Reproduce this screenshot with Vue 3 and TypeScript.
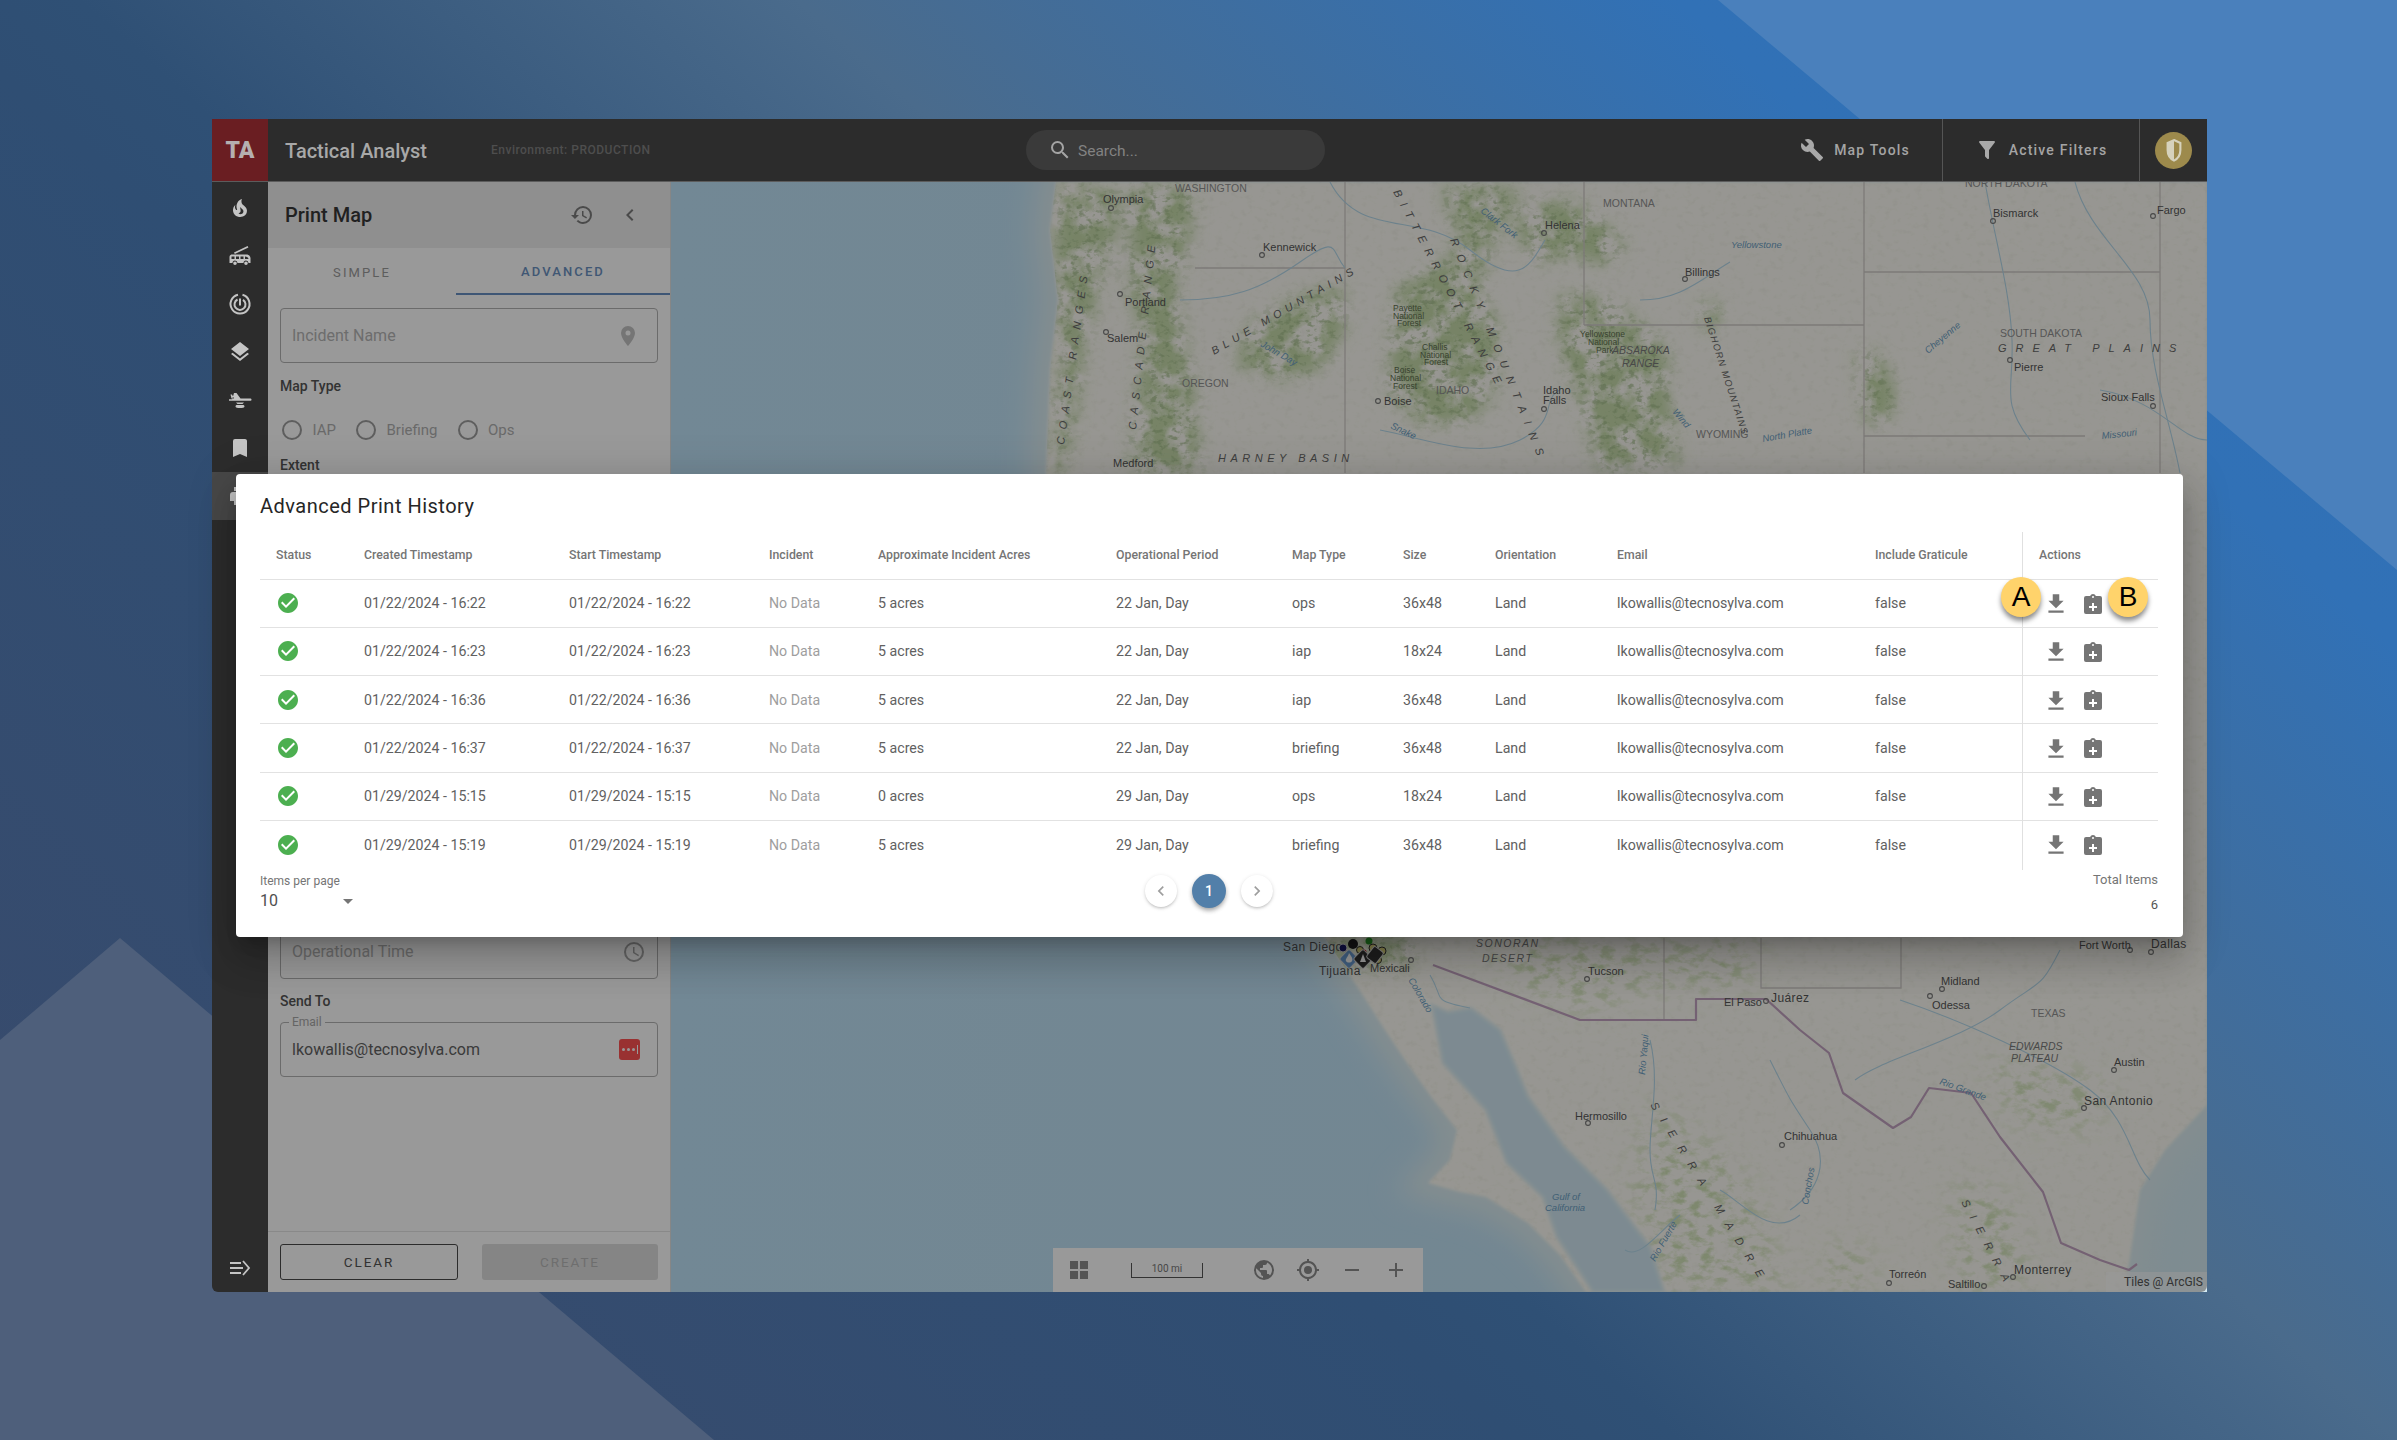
<script setup lang="ts">
interface MapLabel {
    x: number;
    y: number;
    t: string;
    k?: string;
    rot?: number;
    ls?: number;
}

const paths = {
    fire: "M17.66 11.2C17.43 10.9 17.15 10.64 16.89 10.38C16.22 9.78 15.46 9.35 14.82 8.72C13.33 7.26 13 4.85 13.95 3C13 3.23 12.17 3.75 11.46 4.32C8.87 6.4 7.85 10.07 9.07 13.22C9.11 13.32 9.15 13.42 9.15 13.55C9.15 13.77 9 13.97 8.8 14.05C8.57 14.15 8.33 14.09 8.14 13.93C8.08 13.88 8.04 13.83 8 13.76C6.87 12.33 6.69 10.28 7.45 8.64C5.78 10 4.87 12.3 5 14.47C5.06 14.97 5.12 15.47 5.29 15.97C5.43 16.57 5.7 17.17 6 17.7C7.08 19.43 8.95 20.67 10.96 20.92C13.1 21.19 15.39 20.8 17.03 19.32C18.86 17.66 19.5 15 18.56 12.72L18.43 12.46C18.28 12.13 17.66 11.2 17.66 11.2M14.5 17.5C14.22 17.74 13.76 18 13.4 18.1C12.28 18.5 11.16 17.94 10.5 17.28C11.69 17 12.4 16.12 12.61 15.23C12.78 14.43 12.46 13.77 12.33 13C12.21 12.26 12.23 11.63 12.5 10.94C12.69 11.32 12.89 11.7 13.13 12C13.9 13 15.11 13.44 15.37 14.8C15.41 14.94 15.43 15.08 15.43 15.23C15.46 16.05 15.1 16.95 14.5 17.5Z",
    truck: "M19.6 2L20.4 3.600 6.800 10 6 8.400ZM4 10.500H18.500C20.600 10.500 22.500 12.100 22.500 14.100V19H20.500A2.500 2.500 0 0 0 15.500 19H9.500A2.500 2.500 0 0 0 4.500 19H1.500V13C1.500 11.500 2.500 10.500 4 10.500ZM3.500 12.500V15H6.500V12.500ZM8 12.500V15H11V12.500ZM12.500 12.500V15H15.500V12.500ZM17 12.500V15H20.500C20.400 13.600 19 12.500 17 12.500ZM7 17.500A1.800 1.800 0 1 1 7 21.100 1.800 1.800 0 0 1 7 17.500ZM18 17.500A1.800 1.800 0 1 1 18 21.100 1.800 1.800 0 0 1 18 17.500Z",
    layers: "M12,16L19.36,10.27L21,9L12,2L3,9L4.63,10.27M12,18.54L4.62,12.81L3,14.07L12,21.07L21,14.07L19.37,12.81L12,18.54Z",
    plane: "M6 5L8.5 5 12.5 10.5H22C23 10.5 23.5 11 23.5 11.7 23.5 12.3 23 12.7 22 12.7H1V11.2H4.2ZM2.5 6.5L4 6.5 6 10.5H3.5ZM8 14.5H16L14.5 16H9.5ZM9 17H15C15.8 17 16.5 17.6 16.5 18.4 16.5 19.3 14.5 20 12 20S7.5 19.3 7.5 18.4C7.5 17.6 8.2 17 9 17Z",
    bookmark: "M17,3H7A2,2 0 0,0 5,5V21L12,18L19,21V5C19,3.89 18.1,3 17,3Z",
    printer: "M18,3H6V7H18M19,12A1,1 0 0,1 18,11A1,1 0 0,1 19,10A1,1 0 0,1 20,11A1,1 0 0,1 19,12M16,19H8V14H16M19,8H5A3,3 0 0,0 2,11V17H6V21H18V17H22V11A3,3 0 0,0 19,8Z",
    wrench: "M22.7,19L13.6,9.9C14.5,7.6 14,4.9 12.1,3C10.1,1 7.1,0.6 4.7,1.7L9,6L6,9L1.6,4.7C0.4,7.1 0.9,10.1 2.9,12.1C4.8,14 7.5,14.5 9.8,13.6L18.9,22.7C19.3,23.1 19.9,23.1 20.3,22.7L22.6,20.4C23.1,20 23.1,19.3 22.7,19Z",
    filter: "M14,12V19.88C14.04,20.18 13.94,20.5 13.71,20.71C13.32,21.1 12.69,21.1 12.3,20.71L10.29,18.7C10.06,18.47 9.96,18.16 10,17.87V12H9.97L4.21,4.62C3.87,4.19 3.95,3.56 4.38,3.22C4.57,3.08 4.78,3 5,3V3H19V3C19.22,3 19.43,3.08 19.62,3.22C20.05,3.56 20.13,4.19 19.79,4.62L14.03,12H14Z",
    search: "M9.5,3A6.5,6.5 0 0,1 16,9.5C16,11.11 15.41,12.59 14.44,13.73L14.71,14H15.5L20.5,19L19,20.5L14,15.5V14.71L13.73,14.44C12.59,15.41 11.11,16 9.5,16A6.5,6.5 0 0,1 3,9.5A6.5,6.5 0 0,1 9.5,3M9.5,5C7,5 5,7 5,9.5C5,12 7,14 9.5,14C12,14 14,12 14,9.5C14,7 12,5 9.5,5Z",
    history: "M13.5,8H12V13L16.28,15.54L17,14.33L13.5,12.25V8M13,3A9,9 0 0,0 4,12H1L4.96,16.03L9,12H6A7,7 0 0,1 13,5A7,7 0 0,1 20,12A7,7 0 0,1 13,19C11.07,19 9.32,18.21 8.06,16.94L6.64,18.36C8.27,20 10.5,21 13,21A9,9 0 0,0 22,12A9,9 0 0,0 13,3",
    left: "M15.41,16.58L10.83,12L15.41,7.41L14,6L8,12L14,18L15.41,16.58Z",
    right: "M8.59,16.58L13.17,12L8.59,7.41L10,6L16,12L10,18L8.59,16.58Z",
    marker: "M12,11.5A2.5,2.5 0 0,1 9.5,9A2.5,2.5 0 0,1 12,6.5A2.5,2.5 0 0,1 14.5,9A2.5,2.5 0 0,1 12,11.5M12,2A7,7 0 0,0 5,9C5,14.25 12,22 12,22C12,22 19,14.25 19,9A7,7 0 0,0 12,2Z",
    clock: "M12,20A8,8 0 0,0 20,12A8,8 0 0,0 12,4A8,8 0 0,0 4,12A8,8 0 0,0 12,20M12,2A10,10 0 0,1 22,12A10,10 0 0,1 12,22A10,10 0 0,1 2,12A10,10 0 0,1 12,2M12.5,7V12.25L17,14.92L16.25,16.16L11,13V7H12.5Z",
    check: "M12 2C6.5 2 2 6.5 2 12S6.5 22 12 22 22 17.5 22 12 17.5 2 12 2M10 17L5 12L6.41 10.59L10 14.17L17.59 6.58L19 8L10 17Z",
    download: "M5,20H19V18H5M19,9H15V3H9V9H5L12,16L19,9Z",
    clipboard: "M19,3H14.82C14.4,1.84 13.3,1 12,1C10.7,1 9.6,1.84 9.18,3H5A2,2 0 0,0 3,5V19A2,2 0 0,0 5,21H19A2,2 0 0,0 21,19V5A2,2 0 0,0 19,3M12,3A1,1 0 0,1 13,4A1,1 0 0,1 12,5A1,1 0 0,1 11,4A1,1 0 0,1 12,3M16,15H13V18H11V15H8V13H11V10H13V13H16V15Z",
    grid: "M3,11H11V3H3M3,21H11V13H3M13,21H21V13H13M13,3V11H21V3",
    earth: "M17.9,17.39C17.64,16.59 16.89,16 16,16H15V13A1,1 0 0,0 14,12H8V10H10A1,1 0 0,0 11,9V7H13A2,2 0 0,0 15,5V4.59C17.93,5.77 20,8.64 20,12C20,14.08 19.2,15.97 17.9,17.39M11,19.93C7.05,19.44 4,16.08 4,12C4,11.38 4.08,10.78 4.21,10.21L9,15V16A2,2 0 0,0 11,18M12,2A10,10 0 0,0 2,12A10,10 0 0,0 12,22A10,10 0 0,0 22,12A10,10 0 0,0 12,2Z",
    gps: "M12,8A4,4 0 0,1 16,12A4,4 0 0,1 12,16A4,4 0 0,1 8,12A4,4 0 0,1 12,8M3.05,13H1V11H3.05C3.5,6.83 6.83,3.5 11,3.05V1H13V3.05C17.17,3.5 20.5,6.83 20.95,11H23V13H20.95C20.5,17.17 17.17,20.5 13,20.95V23H11V20.95C6.83,20.5 3.5,17.17 3.05,13M12,5A7,7 0 0,0 5,12A7,7 0 0,0 12,19A7,7 0 0,0 19,12A7,7 0 0,0 12,5Z",
    minus: "M19,13H5V11H19V13Z",
    plus: "M19,13H13V19H11V13H5V11H11V5H13V11H19V13Z"
};

const navIcons = [paths.fire, paths.truck, "radar", paths.layers, paths.plane, paths.bookmark, paths.printer];

const columns = [
    "Status",
    "Created Timestamp",
    "Start Timestamp",
    "Incident",
    "Approximate Incident Acres",
    "Operational Period",
    "Map Type",
    "Size",
    "Orientation",
    "Email",
    "Include Graticule",
    "Actions"
];

const rows = [
    { stamp: "01/22/2024 - 16:22", acres: "5 acres", period: "22 Jan, Day", type: "ops", size: "36x48" },
    { stamp: "01/22/2024 - 16:23", acres: "5 acres", period: "22 Jan, Day", type: "iap", size: "18x24" },
    { stamp: "01/22/2024 - 16:36", acres: "5 acres", period: "22 Jan, Day", type: "iap", size: "36x48" },
    { stamp: "01/22/2024 - 16:37", acres: "5 acres", period: "22 Jan, Day", type: "briefing", size: "36x48" },
    { stamp: "01/29/2024 - 15:15", acres: "0 acres", period: "29 Jan, Day", type: "ops", size: "18x24" },
    { stamp: "01/29/2024 - 15:19", acres: "5 acres", period: "29 Jan, Day", type: "briefing", size: "36x48" }
];

const land =
    "M1056,182 L1050,230 1058,300 1050,370 1046,474 1120,640 1240,820 1320,930 1345,968 1364,997 1385,1030 1407,1063 1432,1098 1457,1130 1450,1160 1428,1183 1460,1192 1486,1197 1510,1212 1528,1223 1560,1255 1586,1292 L2130,1292 2128,1270 2140,1190 2165,1150 2207,1105 L2207,182Z";

const gulf =
    "M1432,1005 L1448,1012 1471,1008 1500,1030 1515,1065 1528,1097 1564,1147 1607,1190 1628,1218 1650,1247 1664,1292 L1593,1292 1557,1237 1543,1197 1507,1163 1486,1110 1443,1063Z";

// dense forest: Cascades, Idaho, western Montana, Yellowstone
const forests = [
    "M1056,187 L1110,187 1120,215 1105,270 1085,340 1075,420 1062,474 1052,474 1060,360 1055,270Z",
    "M1125,187 L1194,187 1190,240 1175,290 1182,330 1195,400 1200,473 1130,473 1138,400 1142,330 1128,290 1132,240Z",
    "M1350,187 L1440,187 1460,235 1445,262 1425,270 1395,292 1390,340 1388,395 1425,426 1470,420 1495,395 1500,330 1478,290 1495,240 1520,190 1500,187Z",
    "M1520,205 L1570,200 1625,240 1612,265 1570,255 1535,262 1518,235Z",
    "M1560,293 L1610,300 1665,345 1672,420 1680,463 1600,473 1585,420 1558,340Z",
    "M1235,365 L1250,325 1290,300 1342,285 1345,330 1320,370 1280,380Z",
    "M1856,353 L1878,352 1897,395 1885,425 1865,420Z",
    "M1700,300 L1720,305 1718,330 1700,325Z",
    "M1310,938 L1400,938 1420,958 1400,968 1345,968Z"
];

// sparse vegetation further south
const scrub = [
    "M1480,938 L1610,938 1630,1000 1585,1010 1520,990Z",
    "M1650,1100 L1740,1170 1790,1290 1660,1292 1630,1190Z",
    "M1950,1180 L2010,1200 2030,1280 1960,1292Z",
    "M1830,1240 L1880,1260 1860,1292 1820,1292Z",
    "M1980,1060 L2110,1080 2090,1130 2010,1120Z",
    "M1580,940 L1760,940 1750,990 1620,985Z"
];

const usBorder =
    "M1433,965 L1580,1020 1696,1020 1696,999 1766,999 1800,1030 1829,1053 1843,1093 1893,1128 1911,1117 1929,1088 1971,1093 2000,1137 2043,1192 2061,1243 2100,1260 2129,1270 2137,1264";

const stateLines = [
    "M1864,182V473",
    "M1864,272H2160",
    "M1584,325H1864",
    "M1864,436H2085",
    "M1195,268H1345",
    "M1345,182V473",
    "M2160,182V473",
    "M1664,938V1020",
    "M1761,938V988H1901V938",
    "M1584,182V325"
];

const rivers = [
    "M1330,182 C1360,240 1420,210 1470,250 S1530,265 1545,240",
    "M1180,300 C1230,300 1260,290 1300,262 S1330,250 1345,268",
    "M1730,262 C1700,280 1680,300 1640,300",
    "M1380,430 C1430,440 1480,460 1520,440 S1540,400 1560,390",
    "M1985,182 C1995,240 2010,290 2012,340 S2000,400 2030,440",
    "M2075,182 C2090,240 2150,270 2150,320 S2170,420 2180,473",
    "M2100,390 C2160,400 2180,440 2207,440",
    "M1430,975 C1445,1000 1430,1000 1470,1008",
    "M1650,1040 C1660,1080 1650,1120 1650,1150 S1660,1180 1655,1210",
    "M1790,1210 C1820,1190 1830,1160 1810,1130 S1790,1100 1770,1060",
    "M1800,1215 C1770,1240 1740,1200 1720,1190",
    "M1900,1000 C1960,1020 2050,1060 2090,1090 S2130,1160 2150,1180",
    "M1855,1080 C1880,1060 1960,1040 2000,1010 S2040,990 2060,950",
    "M1625,1250 C1640,1260 1660,1230 1680,1215"
];

const cities = [
    [1111, 208], [1262, 255], [1120, 294], [1106, 332], [1544, 233], [1685, 279], [1993, 221], [2153, 216],
    [1378, 401], [1544, 409], [2010, 360], [2153, 406], [1587, 979], [1766, 1001], [1942, 989], [1930, 996],
    [2130, 950], [2151, 952], [2114, 1070], [2084, 1108], [1588, 1123], [1782, 1145], [1889, 1283], [1984, 1286],
    [2013, 1277], [1411, 960]
];

const labels: MapLabel[] = [
    { x: 1175, y: 192, t: "WASHINGTON", k: "area" },
    { x: 1103, y: 203, t: "Olympia" },
    { x: 1263, y: 251, t: "Kennewick" },
    { x: 1125, y: 306, t: "Portland" },
    { x: 1107, y: 342, t: "Salem" },
    { x: 1214, y: 355, t: "BLUE MOUNTAINS", k: "range", rot: -30, ls: 5 },
    { x: 1182, y: 387, t: "OREGON", k: "area" },
    { x: 1218, y: 462, t: "HARNEY BASIN", k: "range", ls: 4.5 },
    { x: 1113, y: 467, t: "Medford" },
    { x: 1545, y: 229, t: "Helena" },
    { x: 1603, y: 207, t: "MONTANA", k: "area" },
    { x: 1685, y: 276, t: "Billings" },
    { x: 1993, y: 217, t: "Bismarck" },
    { x: 2157, y: 214, t: "Fargo" },
    { x: 1731, y: 248, t: "Yellowstone", k: "river" },
    { x: 1543, y: 394, t: "Idaho" },
    { x: 1543, y: 404, t: "Falls" },
    { x: 1384, y: 405, t: "Boise" },
    { x: 1436, y: 394, t: "IDAHO", k: "area" },
    { x: 1696, y: 438, t: "WYOMING", k: "area" },
    { x: 2000, y: 337, t: "SOUTH DAKOTA", k: "area" },
    { x: 1998, y: 352, t: "GREAT PLAINS", k: "range", ls: 9 },
    { x: 2014, y: 371, t: "Pierre" },
    { x: 2101, y: 401, t: "Sioux Falls" },
    { x: 1965, y: 187, t: "NORTH DAKOTA", k: "area" },
    { x: 1612, y: 354, t: "ABSAROKA", k: "italic" },
    { x: 1622, y: 367, t: "RANGE", k: "italic" },
    { x: 1580, y: 337, t: "Yellowstone", k: "forest" },
    { x: 1588, y: 345, t: "National", k: "forest" },
    { x: 1596, y: 353, t: "Park", k: "forest" },
    { x: 1393, y: 311, t: "Payette", k: "forest" },
    { x: 1393, y: 319, t: "National", k: "forest" },
    { x: 1397, y: 326, t: "Forest", k: "forest" },
    { x: 1422, y: 350, t: "Challis", k: "forest" },
    { x: 1420, y: 358, t: "National", k: "forest" },
    { x: 1424, y: 365, t: "Forest", k: "forest" },
    { x: 1394, y: 373, t: "Boise", k: "forest" },
    { x: 1390, y: 381, t: "National", k: "forest" },
    { x: 1393, y: 389, t: "Forest", k: "forest" },
    { x: 1704, y: 318, t: "BIGHORN MOUNTAINS", k: "small", rot: 72, ls: 1.2 },
    { x: 1393, y: 192, t: "BITTERROOT RANGE", k: "range", rot: 62, ls: 7 },
    { x: 1450, y: 240, t: "ROCKY MOUNTAINS", k: "range", rot: 68, ls: 9 },
    { x: 1136, y: 430, t: "CASCADE RANGE", k: "range", rot: -84, ls: 7.5 },
    { x: 1064, y: 445, t: "COAST RANGES", k: "range", rot: -82, ls: 7.5 },
    { x: 1480, y: 212, t: "Clark Fork", k: "river", rot: 38 },
    { x: 1260, y: 346, t: "John Day", k: "river", rot: 30 },
    { x: 1390, y: 428, t: "Snake", k: "river", rot: 25 },
    { x: 1672, y: 412, t: "Wind", k: "river", rot: 50 },
    { x: 1763, y: 442, t: "North Platte", k: "river", rot: -10 },
    { x: 1928, y: 354, t: "Cheyenne", k: "river", rot: -40 },
    { x: 2102, y: 439, t: "Missouri", k: "river", rot: -6 },
    { x: 1476, y: 947, t: "SONORAN", k: "italic", ls: 1.5 },
    { x: 1482, y: 962, t: "DESERT", k: "italic", ls: 1.5 },
    { x: 1283, y: 951, t: "San Diego", k: "large" },
    { x: 1319, y: 975, t: "Tijuana", k: "large" },
    { x: 1370, y: 972, t: "Mexicali" },
    { x: 1588, y: 975, t: "Tucson" },
    { x: 1724, y: 1006, t: "El Paso" },
    { x: 1771, y: 1002, t: "Juárez", k: "large" },
    { x: 1941, y: 985, t: "Midland" },
    { x: 1932, y: 1009, t: "Odessa" },
    { x: 2031, y: 1017, t: "TEXAS", k: "area" },
    { x: 2009, y: 1050, t: "EDWARDS", k: "italic" },
    { x: 2011, y: 1062, t: "PLATEAU", k: "italic" },
    { x: 2114, y: 1066, t: "Austin" },
    { x: 2084, y: 1105, t: "San Antonio", k: "large" },
    { x: 2079, y: 949, t: "Fort Worth" },
    { x: 2151, y: 948, t: "Dallas", k: "large" },
    { x: 1575, y: 1120, t: "Hermosillo" },
    { x: 1784, y: 1140, t: "Chihuahua" },
    { x: 1552, y: 1200, t: "Gulf of", k: "river" },
    { x: 1545, y: 1211, t: "California", k: "river" },
    { x: 1650, y: 1105, t: "SIERRA MADRE", k: "range", rot: 58, ls: 11 },
    { x: 1889, y: 1278, t: "Torreón" },
    { x: 1948, y: 1288, t: "Saltillo" },
    { x: 2014, y: 1274, t: "Monterrey", k: "large" },
    { x: 1961, y: 1202, t: "SIERRA", k: "range", rot: 62, ls: 10 },
    { x: 1939, y: 1084, t: "Rio Grande", k: "river", rot: 20 },
    { x: 1645, y: 1075, t: "Rio Yaqui", k: "river", rot: -85 },
    { x: 1808, y: 1205, t: "Conchos", k: "river", rot: -80 },
    { x: 1408, y: 980, t: "Colorado", k: "river", rot: 60 },
    { x: 1655, y: 1262, t: "Rio Fuerte", k: "river", rot: -60 }
];

const rotation = (l: MapLabel) => (l.rot ? `rotate(${l.rot} ${l.x} ${l.y})` : undefined);
</script>

<template>
    <div class="page">
        <div class="shape shape-light"></div>
        <div class="shape shape-peak"></div>

        <div class="window">
            <header class="topbar">
                <div class="logo">TA</div>
                <div class="app-title">Tactical Analyst</div>
                <div class="env">Environment: PRODUCTION</div>
                <div class="search">
                    <svg viewBox="0 0 24 24" class="search-icon"><path :d="paths.search" /></svg>
                    <span>Search...</span>
                </div>
                <div class="tool first">
                    <svg viewBox="0 0 24 24"><path :d="paths.wrench" /></svg>
                    <span>Map Tools</span>
                </div>
                <div class="tool second">
                    <svg viewBox="0 0 24 24"><path :d="paths.filter" /></svg>
                    <span>Active Filters</span>
                </div>
                <div class="avatar-box">
                    <div class="avatar">
                        <svg viewBox="0 0 24 24">
                            <path d="M12 5L16.500 7V12C16.500 15.500 15 18 12 19.500C9 18 7.500 15.500 7.500 12V7Z" fill="none" stroke="#d6d2bd" stroke-width="1.500" />
                            <path d="M12 5L7.500 7V12C7.500 15.500 9 18 12 19.500Z" fill="#d6d2bd" />
                        </svg>
                    </div>
                </div>
            </header>

            <div class="main">
                <nav class="sidebar">
                    <div v-for="(icon, i) in navIcons" :key="i" class="nav-item" :class="{ active: i === 6 }">
                        <svg v-if="icon === 'radar'" viewBox="0 0 24 24" class="radar">
                            <path d="M10 2.700A9.500 9.500 0 1 0 14.500 2.800" />
                            <path d="M9.500 7.500A5.500 5.500 0 1 0 15 7.800" />
                            <path d="M12 6.500V13.500" />
                        </svg>
                        <svg v-else viewBox="0 0 24 24"><path :d="icon" fill-rule="evenodd" /></svg>
                    </div>
                    <div class="nav-bottom">
                        <svg viewBox="0 0 24 24" class="collapse">
                            <path d="M2 7H13M2 12H15M2 17H13M15 5L21 12 15 19" />
                        </svg>
                    </div>
                </nav>

                <div class="work">
                    <aside class="panel">
                        <div class="panel-head">
                            <span class="panel-title">Print Map</span>
                            <svg viewBox="0 0 24 24" class="head-history"><path :d="paths.history" /></svg>
                            <svg viewBox="0 0 24 24" class="head-back"><path :d="paths.left" /></svg>
                        </div>
                        <div class="tabs">
                            <div class="tab">SIMPLE</div>
                            <div class="tab active">ADVANCED</div>
                        </div>
                        <div class="panel-body">
                            <div class="field first-field">
                                <span class="placeholder">Incident Name</span>
                                <svg viewBox="0 0 24 24" class="field-icon"><path :d="paths.marker" /></svg>
                            </div>
                            <div class="label map-type">Map Type</div>
                            <div class="radios">
                                <div class="radio"><i></i>IAP</div>
                                <div class="radio"><i></i>Briefing</div>
                                <div class="radio"><i></i>Ops</div>
                            </div>
                            <div class="label extent">Extent</div>
                            <div class="hidden-fields"></div>
                            <div class="field">
                                <span class="placeholder">Operational Time</span>
                                <svg viewBox="0 0 24 24" class="field-icon clock"><path :d="paths.clock" /></svg>
                            </div>
                            <div class="label send-to">Send To</div>
                            <div class="field email">
                                <span class="legend">Email</span>
                                <span class="value">lkowallis@tecnosylva.com</span>
                                <span class="lastpass">
                                    <b></b><b></b><b></b><em></em>
                                </span>
                            </div>
                        </div>
                        <div class="panel-foot">
                            <div class="btn clear">CLEAR</div>
                            <div class="btn create">CREATE</div>
                        </div>
                    </aside>

                    <section class="map">
                        <svg class="map-svg" viewBox="671 182 1536 1110" preserveAspectRatio="none">
                            <defs>
                                <linearGradient id="sea" x1="0" y1="0" x2="1" y2="0">
                                    <stop offset="0" stop-color="#bfe3f8" />
                                    <stop offset="0.6" stop-color="#c0e1f3" />
                                    <stop offset="1" stop-color="#d4eaf2" />
                                </linearGradient>
                                <filter id="patchy" x="-5%" y="-5%" width="110%" height="110%">
                                    <feGaussianBlur in="SourceGraphic" stdDeviation="8" result="soft" />
                                    <feTurbulence type="fractalNoise" baseFrequency="0.04" numOctaves="5" seed="8" result="noise" />
                                    <feColorMatrix in="noise" values="0 0 0 0 0  0 0 0 0 0  0 0 0 0 0  3.500 0 0 0 -1.150" result="mask" />
                                    <feComposite in="soft" in2="mask" operator="in" />
                                </filter>
                                <filter id="ridges" x="-5%" y="-5%" width="110%" height="110%">
                                    <feGaussianBlur in="SourceGraphic" stdDeviation="10" result="soft" />
                                    <feTurbulence type="fractalNoise" baseFrequency="0.14 0.2" numOctaves="3" seed="14" result="noise" />
                                    <feColorMatrix in="noise" values="0 0 0 0 0  0 0 0 0 0  0 0 0 0 0  5 0 0 0 -2.600" result="mask" />
                                    <feComposite in="soft" in2="mask" operator="in" />
                                </filter>
                                <filter id="sparse" x="-5%" y="-5%" width="110%" height="110%">
                                    <feGaussianBlur in="SourceGraphic" stdDeviation="16" result="soft" />
                                    <feTurbulence type="fractalNoise" baseFrequency="0.07 0.11" numOctaves="4" seed="21" result="noise" />
                                    <feColorMatrix in="noise" values="0 0 0 0 0  0 0 0 0 0  0 0 0 0 0  4 0 0 0 -1.900" result="mask" />
                                    <feComposite in="soft" in2="mask" operator="in" />
                                </filter>
                                <filter id="speckle" x="0" y="0" width="100%" height="100%">
                                    <feTurbulence type="fractalNoise" baseFrequency="0.13 0.17" numOctaves="3" seed="3" />
                                    <feColorMatrix values="0 0 0 0 0.55  0 0 0 0 0.55  0 0 0 0 0.48  3 0 0 0 -1.600" />
                                </filter>
                                <filter id="shore" x="-5%" y="-5%" width="110%" height="110%">
                                    <feGaussianBlur stdDeviation="14" />
                                </filter>
                                <filter id="edge" x="-5%" y="-5%" width="110%" height="110%">
                                    <feGaussianBlur stdDeviation="1.800" />
                                </filter>
                                <clipPath id="land-clip"><path :d="land" /></clipPath>
                            </defs>
                            <rect x="671" y="182" width="1536" height="1110" fill="url(#sea)" />
                            <path :d="land" fill="#dcecf0" stroke="#dcecf0" stroke-width="36" filter="url(#shore)" />
                            <path :d="land" fill="#fcfbf3" filter="url(#edge)" />
                            <g clip-path="url(#land-clip)">
                                <rect x="1040" y="182" width="1167" height="1110" filter="url(#speckle)" opacity="0.140" />
                                <g filter="url(#patchy)" fill="#c6dbaa">
                                    <path v-for="f in forests" :key="f" :d="f" />
                                </g>
                                <g filter="url(#ridges)" fill="#9db884" opacity="0.600">
                                    <path v-for="f in forests" :key="f" :d="f" />
                                </g>
                                <g filter="url(#sparse)" fill="#d2e3b8">
                                    <path v-for="f in scrub" :key="f" :d="f" />
                                </g>
                            </g>
                            <path :d="gulf" fill="#d0e7f2" stroke="#e0eff2" stroke-width="3" filter="url(#edge)" />
                            <g fill="none" stroke="#cfcbc8" stroke-width="1.300">
                                <path v-for="s in stateLines" :key="s" :d="s" />
                            </g>
                            <g fill="none" stroke="#b5d8ea" stroke-width="1.100">
                                <path v-for="r in rivers" :key="r" :d="r" />
                            </g>
                            <path :d="usBorder" fill="none" stroke="#c2a2c0" stroke-width="2.200" stroke-linejoin="round" />
                            <g fill="none" stroke="#777" stroke-width="1.100">
                                <circle v-for="c in cities" :key="c.join()" :cx="c[0]" :cy="c[1]" r="2.400" />
                            </g>
                            <g class="map-text">
                                <text
                                    v-for="l in labels"
                                    :key="l.t + l.x"
                                    :x="l.x"
                                    :y="l.y"
                                    :class="l.k"
                                    :letter-spacing="l.ls"
                                    :transform="rotation(l)"
                                >{{ l.t }}</text>
                            </g>
                            <g class="pins">
                                <circle cx="1353" cy="944" r="5" fill="#222" />
                                <circle cx="1343" cy="948" r="4" fill="#1b1b6b" stroke="#ddd" />
                                <circle cx="1369" cy="941" r="3.500" fill="#2a9c2a" />
                                <circle cx="1373" cy="948" r="4" fill="#d9d27a" stroke="#333" />
                                <circle cx="1382" cy="951" r="4" fill="#d9d27a" stroke="#333" />
                                <circle cx="1360" cy="950" r="3.500" fill="#d9d27a" stroke="#333" />
                                <circle cx="1364" cy="952" r="2.500" fill="#c92020" />
                                <circle cx="1378" cy="960" r="3.500" fill="#d9d27a" stroke="#333" />
                                <rect x="1342" y="952" width="14" height="14" rx="2" fill="#6d9fd6" stroke="#e3e3e3" transform="rotate(45 1349 959)" />
                                <rect x="1356" y="952" width="14" height="14" rx="2" fill="#333" stroke="#ddd" transform="rotate(45 1363 959)" />
                                <rect x="1369" y="948" width="12" height="14" rx="2" fill="#333" stroke="#ddd" transform="rotate(38 1375 955)" />
                                <path d="M1349 953C1352 957 1353 959 1352 961 1351 963 1347 963 1346 961 1345 959 1348 957 1349 953Z" fill="#fff" />
                                <path d="M1363 954L1366 962H1360Z" fill="#fff" />
                            </g>
                        </svg>

                        <div class="map-tools">
                            <svg viewBox="0 0 24 24" class="mt-grid"><path :d="paths.grid" /></svg>
                            <div class="scale">100 mi</div>
                            <svg viewBox="0 0 24 24"><path :d="paths.earth" /></svg>
                            <svg viewBox="0 0 24 24"><path :d="paths.gps" /></svg>
                            <svg viewBox="0 0 24 24"><path :d="paths.minus" /></svg>
                            <svg viewBox="0 0 24 24"><path :d="paths.plus" /></svg>
                        </div>
                        <div class="attribution">Tiles @ ArcGIS</div>
                    </section>
                    <div class="scrim"></div>
                </div>
            </div>

            <div class="dialog">
                <h2 class="dialog-title">Advanced Print History</h2>
                <div class="table">
                    <div class="tr th">
                        <div v-for="c in columns" :key="c" class="cell">{{ c }}</div>
                    </div>
                    <div v-for="r in rows" :key="r.stamp" class="tr">
                        <div class="cell">
                            <svg viewBox="0 0 24 24" class="status">
                                <circle cx="12" cy="12" r="8" fill="#fff" />
                                <path :d="paths.check" />
                            </svg>
                        </div>
                        <div class="cell">{{ r.stamp }}</div>
                        <div class="cell">{{ r.stamp }}</div>
                        <div class="cell muted">No Data</div>
                        <div class="cell">{{ r.acres }}</div>
                        <div class="cell">{{ r.period }}</div>
                        <div class="cell">{{ r.type }}</div>
                        <div class="cell">{{ r.size }}</div>
                        <div class="cell">Land</div>
                        <div class="cell">lkowallis@tecnosylva.com</div>
                        <div class="cell">false</div>
                        <div class="cell actions">
                            <svg viewBox="0 0 24 24" class="act-download"><path :d="paths.download" /></svg>
                            <svg viewBox="0 0 24 24" class="act-clip"><path :d="paths.clipboard" fill-rule="evenodd" /></svg>
                        </div>
                    </div>
                </div>
                <div class="dialog-foot">
                    <div class="per-page">
                        <div class="small-label">Items per page</div>
                        <div class="per-value">10<i class="caret"></i></div>
                    </div>
                    <div class="pager">
                        <div class="page-btn">
                            <svg viewBox="0 0 24 24"><path :d="paths.left" /></svg>
                        </div>
                        <div class="page-btn current">1</div>
                        <div class="page-btn">
                            <svg viewBox="0 0 24 24"><path :d="paths.right" /></svg>
                        </div>
                    </div>
                    <div class="total">
                        <div>Total Items</div>
                        <div class="total-n">6</div>
                    </div>
                </div>
                <div class="callout a">A</div>
                <div class="callout b">B</div>
            </div>
        </div>
    </div>
</template>

<style scoped>
.page {
    position: relative;
    width: 2397px;
    height: 1440px;
    overflow: hidden;
    padding: 119px 190px 148px 212px;
    box-sizing: border-box;
    font-family: Roboto, "Liberation Sans", sans-serif;
    background: linear-gradient(42deg, #3a4a6b 0%, #2f4e73 38%, #2f5075 42%, #4a6b8c 60%, #3171b6 82%, #2f70b8 100%);
}

.shape {
    position: absolute;
    inset: 0;
}

.shape-light {
    background: #4a80bc;
    clip-path: polygon(1718px 0, 2397px 570px, 2397px 0);
}

.shape-peak {
    background: #4e5f7b;
    clip-path: polygon(0 1040px, 120px 938px, 714px 1440px, 0 1440px);
}

.window {
    position: relative;
    display: flex;
    flex-direction: column;
    width: 1995px;
    height: 1173px;
    border-radius: 0 0 6px 6px;
}

.topbar {
    flex: 0 0 63px;
    display: flex;
    align-items: center;
    background: #2c2c2c;
    border-bottom: 1px solid #5c5c5c;
    box-sizing: border-box;
}

.logo {
    flex: 0 0 56px;
    align-self: stretch;
    display: flex;
    align-items: center;
    justify-content: center;
    background: #6a1e22;
    color: #b5b0b0;
    font-size: 23px;
    font-weight: 900;
}

.app-title {
    flex: 0 0 206px;
    margin-left: 17px;
    padding-top: 1px;
    color: #a8a8a8;
    font-size: 20px;
    font-weight: 500;
}

.env {
    flex: 0 0 535px;
    color: #4e4e4e;
    font-size: 12px;
    font-weight: 500;
    letter-spacing: 0.500px;
}

.search {
    flex: 0 0 299px;
    height: 40px;
    box-sizing: border-box;
    display: flex;
    align-items: center;
    padding-left: 22px;
    border-radius: 20px;
    background: #3a3a3a;
    color: #828282;
    font-size: 15.500px;
}

.search span {
    padding-top: 2px;
}

.search-icon {
    width: 24px;
    height: 24px;
    fill: #a4a4a4;
    margin-right: 6px;
}

.tool {
    display: flex;
    align-items: center;
    align-self: stretch;
    gap: 10px;
    color: #a4a4a4;
    font-size: 14px;
    font-weight: 500;
    letter-spacing: 1.200px;
}

.tool svg {
    width: 24px;
    height: 24px;
    fill: #a8a8a8;
}

.tool.first {
    flex: 1;
    justify-content: flex-end;
    padding-right: 32px;
    border-right: 1px solid #555;
}

.tool.second {
    flex: 0 0 197px;
    box-sizing: border-box;
    justify-content: center;
    border-right: 1px solid #555;
}

.avatar-box {
    flex: 0 0 67px;
    display: flex;
    justify-content: center;
}

.avatar {
    width: 37px;
    height: 37px;
    border-radius: 50%;
    background: #9d8a4c;
    display: flex;
    align-items: center;
    justify-content: center;
}

.avatar svg {
    width: 34px;
    height: 34px;
}

.main {
    flex: 1;
    display: flex;
    min-height: 0;
}

.sidebar {
    flex: 0 0 56px;
    display: flex;
    flex-direction: column;
    padding-top: 2px;
    background: #2c2c2c;
    border-radius: 0 0 0 6px;
}

.nav-item {
    flex: 0 0 48px;
    display: flex;
    align-items: center;
    justify-content: center;
}

.nav-item.active {
    background: #484848;
}

.nav-item svg {
    width: 24px;
    height: 24px;
    fill: #c4c4c4;
}

.nav-item svg.radar {
    fill: none;
    stroke: #c4c4c4;
    stroke-width: 2;
}

.nav-bottom {
    margin-top: auto;
    height: 48px;
    display: flex;
    justify-content: center;
    align-items: center;
}

.collapse {
    width: 24px;
    height: 24px;
    fill: none;
    stroke: #c4c4c4;
    stroke-width: 1.800;
}

.work {
    position: relative;
    flex: 1;
    display: flex;
    min-width: 0;
}

.scrim {
    position: absolute;
    inset: 0;
    background: rgba(0, 0, 0, 0.4);
    pointer-events: none;
    border-radius: 0 0 6px 0;
}

.panel {
    flex: 0 0 403px;
    display: flex;
    flex-direction: column;
    background: #fff;
    border-right: 1px solid #dfdfdf;
    box-sizing: border-box;
}

.panel-head {
    flex: 0 0 66px;
    display: flex;
    align-items: center;
    padding-left: 17px;
    background: #eeeeee;
}

.panel-title {
    flex: 1;
    color: #383838;
    font-size: 20px;
    font-weight: 500;
}

.head-history {
    width: 24px;
    height: 24px;
    fill: #7c7c7c;
    margin-right: 24px;
}

.head-back {
    width: 24px;
    height: 24px;
    fill: #7c7c7c;
    margin-right: 28px;
}

.tabs {
    flex: 0 0 47px;
    display: flex;
}

.tab {
    flex: 0 0 188px;
    display: flex;
    align-items: center;
    justify-content: center;
    color: #9b9b9b;
    font-size: 13px;
    letter-spacing: 2.100px;
    box-sizing: border-box;
    padding-top: 1px;
}

.tab.active {
    flex: 1;
    color: #6c92c2;
    font-weight: 500;
    border-bottom: 2px solid #6890c4;
}

.panel-body {
    flex: 1;
    display: flex;
    flex-direction: column;
    padding: 13px 12px 0;
}

.field {
    position: relative;
    flex: 0 0 55px;
    box-sizing: border-box;
    display: flex;
    align-items: center;
    padding: 0 11px;
    border: 1px solid #b2b2b2;
    border-radius: 4px;
    font-size: 16px;
}

.placeholder {
    flex: 1;
    color: #b6b6b6;
}

.field-icon {
    width: 24px;
    height: 24px;
    fill: #c4c4c4;
    margin-right: 6px;
}

.field-icon.clock {
    margin-right: 0;
    fill: #aaa;
}

.label {
    color: #555;
    font-size: 14px;
    font-weight: 500;
    line-height: 16px;
}

.map-type {
    margin-top: 15px;
}

.radios {
    display: flex;
    gap: 20px;
    margin-top: 26px;
    padding-left: 2px;
}

.radio {
    display: flex;
    align-items: center;
    gap: 10.500px;
    color: #b0b0b0;
    font-size: 15px;
}

.radio i {
    width: 16px;
    height: 16px;
    border: 2px solid #9d9d9d;
    border-radius: 50%;
}

.extent {
    margin-top: 17px;
}

.hidden-fields {
    flex: 0 0 451px;
}

.send-to {
    margin-top: 14px;
}

.email {
    margin-top: 13px;
}

.legend {
    position: absolute;
    top: -8px;
    left: 8px;
    padding: 0 3px;
    background: #fff;
    color: #a8a8a8;
    font-size: 12px;
    line-height: 14px;
}

.value {
    flex: 1;
    color: #636363;
}

.lastpass {
    display: flex;
    align-items: center;
    justify-content: center;
    gap: 2px;
    width: 21px;
    height: 21px;
    margin-right: 6px;
    border-radius: 3px;
    background: #ff5252;
}

.lastpass b {
    width: 3px;
    height: 3px;
    border-radius: 50%;
    background: #fff;
}

.lastpass em {
    width: 1px;
    height: 9px;
    background: #fff;
}

.panel-foot {
    flex: 0 0 61px;
    display: flex;
    gap: 24px;
    padding: 12px 12px 0;
    box-sizing: border-box;
    border-top: 1px solid #e4e4e4;
}

.btn {
    flex: 1;
    height: 36px;
    box-sizing: border-box;
    display: flex;
    align-items: center;
    justify-content: center;
    border-radius: 3px;
    font-size: 13.500px;
    letter-spacing: 1.900px;
}

.btn.clear {
    border: 1px solid #4a4a4a;
    color: #545454;
}

.btn.create {
    background: #dedede;
    color: #b8b8b8;
}

.map {
    position: relative;
    flex: 1;
    min-width: 0;
}

.map-svg {
    display: block;
    width: 100%;
    height: 100%;
}

.map-text text {
    font-family: "Liberation Sans", Arial, sans-serif;
    font-size: 11px;
    fill: #565656;
}

.map-text text.large {
    font-size: 12px;
    letter-spacing: 0.4px;
}

.map-text text.area {
    font-size: 10.500px;
    fill: #909090;
}

.map-text text.range {
    font-size: 11px;
    font-style: italic;
    fill: #686868;
}

.map-text text.italic {
    font-size: 10.500px;
    font-style: italic;
    fill: #7a7a7a;
}

.map-text text.river {
    font-size: 9.500px;
    font-style: italic;
    fill: #6d9fc4;
}

.map-text text.forest {
    font-size: 8.500px;
    fill: #5f7050;
}

.map-text text.small {
    font-size: 9.500px;
    font-style: italic;
    fill: #686868;
}

.map-tools {
    position: absolute;
    left: 382px;
    bottom: 0;
    width: 370px;
    height: 44px;
    box-sizing: border-box;
    display: flex;
    align-items: center;
    padding-left: 14px;
    background: #fff;
}

.map-tools svg {
    flex: 0 0 24px;
    width: 24px;
    height: 24px;
    fill: #8c8c8c;
    margin-right: 20px;
}

.map-tools .mt-grid {
    margin-right: 40px;
}

.scale {
    flex: 0 0 72px;
    height: 15px;
    box-sizing: border-box;
    margin-right: 49px;
    border: 1px solid #555;
    border-top: none;
    color: #777;
    font-size: 10px;
    line-height: 12px;
    text-align: center;
}

.attribution {
    position: absolute;
    right: 0;
    bottom: 0;
    height: 20px;
    padding: 0 4px 0 18px;
    background: rgba(255, 255, 255, 0.55);
    border-radius: 0 0 6px 0;
    color: #555;
    font-size: 12px;
    line-height: 20px;
}

.dialog {
    position: absolute;
    z-index: 5;
    left: 24px;
    top: 355px;
    width: 1947px;
    height: 463px;
    box-sizing: border-box;
    padding: 0 25px 0 24px;
    background: #fff;
    border-radius: 4px;
    box-shadow: 0 11px 15px -7px rgba(0, 0, 0, 0.2), 0 24px 38px 3px rgba(0, 0, 0, 0.14), 0 9px 46px 8px rgba(0, 0, 0, 0.12);
}

.dialog-title {
    margin: 0;
    padding-top: 20px;
    height: 58px;
    box-sizing: border-box;
    color: #262626;
    font-size: 20px;
    font-weight: 400;
    line-height: 24px;
    letter-spacing: 0.500px;
}

.table {
    display: flex;
    flex-direction: column;
}

.tr {
    display: grid;
    grid-template-columns: 88px 205px 200px 109px 238px 176px 111px 92px 122px 258px 163px 136px;
    height: 48.300px;
    box-sizing: border-box;
    border-bottom: 1px solid #e2e2e2;
    color: #616161;
    font-size: 14.200px;
}

.tr:last-child {
    border-bottom: none;
}

.tr.th {
    height: 47.500px;
    color: #757575;
    font-size: 12.300px;
    font-weight: 500;
}

.cell {
    display: flex;
    align-items: center;
    padding-left: 16px;
    white-space: nowrap;
}

.cell:last-child {
    border-left: 1px solid #e0e0e0;
    margin-bottom: -1px;
    padding-bottom: 1px;
}

.muted {
    color: #9e9e9e;
}

.status {
    width: 24px;
    height: 24px;
    fill: #4caf50;
}

.actions {
    position: relative;
}

.act-download {
    position: absolute;
    left: 20px;
    top: 11.500px;
    width: 26px;
    height: 26px;
    fill: #757575;
}

.act-clip {
    position: absolute;
    left: 58px;
    top: 13px;
    width: 24px;
    height: 24px;
    fill: #757575;
}

.dialog-foot {
    display: grid;
    grid-template-columns: 1fr auto 1fr;
    align-items: start;
}

.small-label {
    margin-top: 5px;
    color: #757575;
    font-size: 12px;
    line-height: 14px;
}

.per-value {
    display: flex;
    align-items: center;
    width: 93px;
    justify-content: space-between;
    margin-top: 4px;
    color: #4f4f4f;
    font-size: 16px;
    line-height: 18px;
}

.caret {
    width: 0;
    height: 0;
    border: 5px solid transparent;
    border-top-color: #757575;
    border-bottom: none;
}

.pager {
    display: flex;
    align-items: center;
    gap: 15px;
    padding-top: 5px;
}

.page-btn {
    width: 32px;
    height: 32px;
    border-radius: 50%;
    display: flex;
    align-items: center;
    justify-content: center;
    background: #fff;
    box-shadow: 0 2px 3px -1px rgba(0, 0, 0, 0.2), 0 1px 4px rgba(0, 0, 0, 0.12);
}

.page-btn svg {
    width: 20px;
    height: 20px;
    fill: #9e9e9e;
}

.page-btn.current {
    width: 34px;
    height: 34px;
    background: #527fa9;
    color: #fff;
    font-size: 14px;
    font-weight: 500;
    box-shadow: 0 3px 5px -1px rgba(0, 0, 0, 0.3), 0 2px 5px rgba(0, 0, 0, 0.14);
}

.total {
    text-align: right;
    color: #757575;
    font-size: 13px;
    line-height: 14px;
    margin-top: 4px;
}

.total-n {
    margin-top: 11px;
    color: #555;
}

.callout {
    position: absolute;
    top: 102.500px;
    width: 40px;
    height: 40px;
    border-radius: 50%;
    display: flex;
    align-items: center;
    justify-content: center;
    background: #ffd36b;
    box-shadow: 0 4px 5px rgba(0, 0, 0, 0.45);
    color: #000;
    font-family: "Liberation Sans", Arial, sans-serif;
    font-size: 28px;
}

.callout.a {
    left: 1765px;
}

.callout.b {
    left: 1872px;
}
</style>
